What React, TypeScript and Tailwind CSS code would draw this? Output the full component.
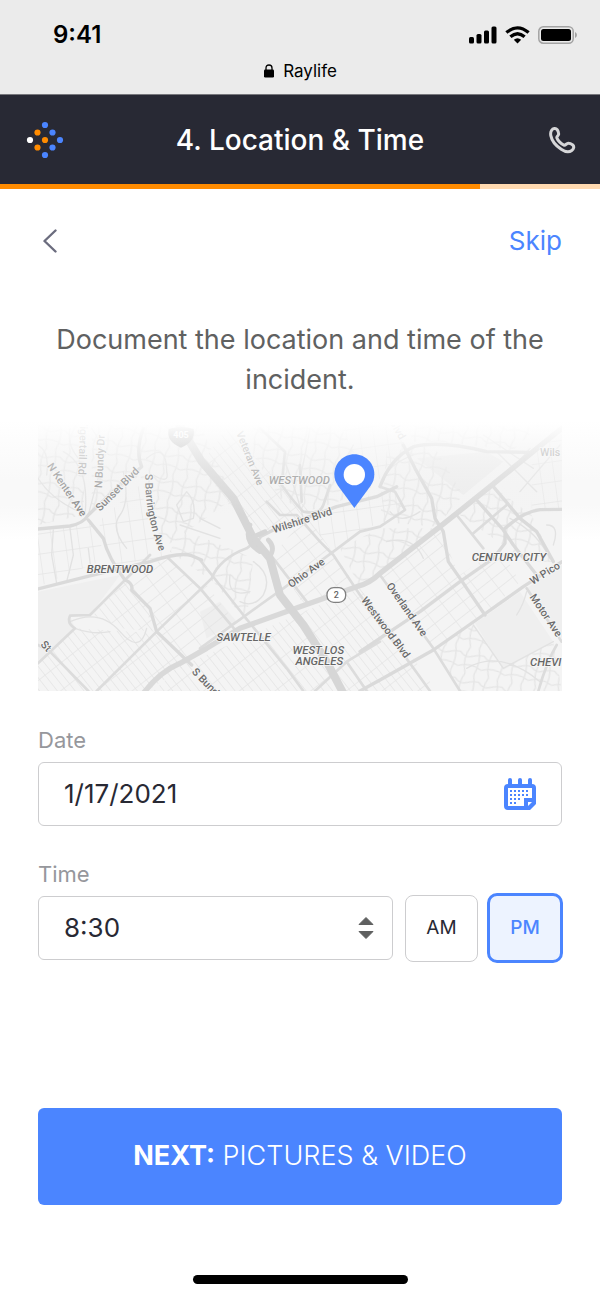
import { useState } from "react";

const LOCAL_AREAS: { points: string; fill: string }[] = [
  { points: "54,350 210,320 262,430 54,515", fill: "url(#gridUpright)" },
  { points: "235,320 360,210 390,330 440,425 285,450", fill: "url(#gridUpright)" },
  { points: "54,30 200,30 190,300 54,330", fill: "url(#gridLoose)" },
  { points: "215,30 540,30 640,250 430,400 360,180 215,290", fill: "url(#gridLoose)" },
  { points: "320,490 440,425 545,520 410,650", fill: "url(#gridDiagonal)" },
  { points: "450,410 480,340 700,430 680,620 580,500", fill: "url(#gridLoose)" },
  { points: "54,745 165,640 410,655 510,745 380,828 54,828", fill: "url(#gridDiagonalTight)" },
  { points: "220,600 315,500 390,590 405,650 300,640", fill: "url(#gridDiagonalTight)" },
  { points: "410,650 560,510 660,640 500,740", fill: "url(#gridDiagonal)" },
  { points: "480,755 850,590 985,828 400,828", fill: "url(#gridDiagonalTight)" },
  { points: "700,30 960,30 1060,225 860,290 780,250 700,120", fill: "url(#gridLoose)" },
  { points: "860,300 1130,215 1150,290 1020,350 930,410", fill: "url(#gridUpright)" },
  { points: "960,400 1080,340 1250,340 1080,475 1020,520", fill: "url(#gridLoose)" },
  { points: "540,150 700,370 870,290 770,190 620,40", fill: "url(#gridDiagonalTight)" },
  { points: "760,420 860,300 1010,515 850,570", fill: "url(#gridDiagonal)" },
  { points: "850,590 1020,520 1180,730 1250,828 985,828", fill: "url(#gridDiagonalTight)" },
  { points: "1080,480 1260,340 1320,490 1395,600 1240,700", fill: "url(#gridDiagonal)" },
  { points: "960,30 1100,30 1160,90 1090,180 1050,220", fill: "url(#gridUpright)" },
  { points: "1160,30 1560,30 1480,105 1260,80 1180,80", fill: "url(#gridLoose)" },
  { points: "1100,110 1240,90 1330,240 1250,335 1080,320", fill: "url(#gridLoose)" },
  { points: "1320,480 1440,400 1500,500 1395,600", fill: "url(#gridDiagonal)" },
  { points: "1535,100 1626,60 1626,280 1535,280", fill: "url(#gridUpright)" },
  { points: "1320,300 1420,215 1535,300 1600,440 1520,440", fill: "url(#gridLoose)" },
  { points: "1240,700 1360,630 1450,760 1600,680 1626,828 1320,828", fill: "url(#gridLoose)" },
];

const MINOR_ROADS = [
  "M150 340 L160 420 L140 500 M100 345 L95 420 L110 505 M205 400 L215 480",
  "M130 110 Q210 150 195 300 M215 40 Q260 100 240 170 T205 300",
  "M54 190 Q100 260 190 295 M54 90 Q90 110 80 180 M150 40 Q140 90 175 130",
  "M310 170 Q330 260 300 300 T320 400 M380 130 Q440 80 440 170 Q450 210 400 180",
  "M470 270 L500 230 Q530 260 520 310 L490 320 Z M480 330 L600 370 M540 310 L600 340",
  "M150 620 Q240 580 300 650 T380 640 M165 640 Q220 660 270 650",
  "M630 480 Q620 550 690 530 M700 440 Q760 480 730 540 Q700 580 660 560",
  "M850 310 Q820 200 790 130 M870 40 Q860 100 840 190 M1000 90 Q970 140 950 190",
  "M1090 200 Q1100 150 1180 120 M1110 290 Q1140 330 1200 290 M1100 380 Q1180 360 1210 430",
  "M1430 110 Q1480 160 1550 230 M1470 310 Q1550 350 1590 430 M1580 330 Q1620 330 1600 390",
  "M1360 630 L1450 760 L1600 680 M1490 600 Q1510 570 1520 530 M1340 760 Q1440 700 1560 800",
  "M1390 60 L1540 160 M1460 180 L1530 100 M1500 230 L1620 90",
];

const MEDIUM_ROADS = [
  "M54 745 L165 640 Q140 625 150 602 L210 600 L390 420",
  "M54 690 L90 710 L205 828",
  "M230 828 L410 650 L575 490 Q600 430 680 400 L720 370",
  "M445 430 L540 520 L650 650",
  "M540 435 L670 600 L800 760 L850 828",
  "M740 260 L780 300 L830 300 L900 380 L940 420 L1020 540",
  "M720 40 L795 110 L785 210 Q820 260 850 290 Q900 300 910 270 L930 210 M840 150 L845 260",
  "M1020 540 L1170 745 L1230 828",
  "M540 700 L720 570 L790 520 L940 410 L1020 350 L1080 335 L1155 285 L1125 230 L1080 215",
  "M980 740 L1040 828 M980 740 L1080 680 M885 828 L980 740",
  "M1080 480 L1240 700 L1320 828",
  "M1310 300 L1390 400 M1360 355 L1460 270",
  "M1520 520 L1625 680 M1610 690 Q1580 740 1555 828",
  "M760 430 L860 560",
];

const MAIN_ROADS = [
  "M54 342 L150 333 Q190 325 205 300 L310 200 L365 155 Q345 110 370 40",
  "M205 315 L250 370 Q265 430 315 495 Q340 505 335 525 L390 580 L410 650 L515 750",
  "M54 522 L200 485 L390 440 Q480 410 515 422 L545 435",
  "M1080 215 Q1110 130 1180 95 Q1260 75 1400 110 L1530 112",
  "M1150 90 L1185 160 L1235 250 L1245 310 L1270 350 L1285 440 L1320 490 L1395 600",
  "M1370 255 L1450 345 L1480 390 L1550 480",
  "M1420 215 L1500 310 L1550 350 L1600 440",
  "M1455 340 Q1510 290 1560 284 L1626 283",
  "M1455 350 L1455 385 L1420 430 L1320 500 L1200 590 L1020 710",
  "M1626 440 L1510 515 L1390 600 L1240 705 L1080 795 L1020 828",
  "M720 365 L760 345 L950 275 L1070 245 L1130 215",
];

type MapLabel = { text: string; x: number; y: number; angle: number; color: string };

const STREETS: MapLabel[] = [
  { text: "N Kenter Ave", x: 80, y: 153, angle: 56, color: "#8a8a8a" },
  { text: "Tigertail Rd", x: 181, y: 14, angle: 92, color: "#a4a4a4" },
  { text: "N Bundy Dr", x: 246, y: 220, angle: -87, color: "#939393" },
  { text: "Sunset Blvd", x: 240, y: 290, angle: -45, color: "#808080" },
  { text: "Veteran Ave", x: 648, y: 54, angle: 68, color: "#9c9c9c" },
  { text: "Wilshire Blvd", x: 762, y: 355, angle: -18, color: "#707070" },
  { text: "Ohio Ave", x: 814, y: 520, angle: -36, color: "#6b6b6b" },
  { text: "Westwood Blvd", x: 1022, y: 556, angle: 53, color: "#6b6b6b" },
  { text: "Overland Ave", x: 1098, y: 512, angle: 55, color: "#6b6b6b" },
  { text: "W Pico", x: 1538, y: 510, angle: -32, color: "#6b6b6b" },
  { text: "Motor Ave", x: 1528, y: 546, angle: 56, color: "#6b6b6b" },
  { text: "S Bundy", x: 514, y: 772, angle: 46, color: "#6b6b6b" },
  { text: "St", x: 60, y: 690, angle: 46, color: "#6b6b6b" },
  { text: "Blvd", x: 1108, y: 22, angle: 60, color: "#bdbdbd" },
  { text: "Wils", x: 1560, y: 122, angle: 0, color: "#9c9c9c" },
];

const DISTRICTS = [
  { text: "BRENTWOOD", x: 300, y: 475, color: "#666666" },
  { text: "WESTWOOD", x: 838, y: 207, color: "#8c8c8c" },
  { text: "SAWTELLE", x: 671, y: 679, color: "#666666" },
  { text: "WEST LOS", x: 895, y: 716, color: "#666666" },
  { text: "ANGELES", x: 898, y: 750, color: "#666666" },
  { text: "CENTURY CITY", x: 1467, y: 438, color: "#666666" },
  { text: "CHEVI", x: 1577, y: 752, color: "#666666" },
];

function IncidentMap() {
  return (
    <svg
      viewBox="54 30 1572 798"
      className="block w-full font-['Roboto',sans-serif]"
      role="img"
      aria-label="Map of the incident location"
    >
      <defs>
        <pattern id="gridUpright" width="40" height="60" patternUnits="userSpaceOnUse" patternTransform="rotate(-8)">
          <path d="M0 0H40M0 0V60" stroke="#e5e5e5" strokeWidth="4" fill="none" />
        </pattern>
        <pattern id="gridDiagonal" width="54" height="34" patternUnits="userSpaceOnUse" patternTransform="rotate(-38)">
          <path d="M0 0H54M0 0V34" stroke="#e4e4e4" strokeWidth="4" fill="none" />
        </pattern>
        <pattern id="gridDiagonalTight" width="66" height="21" patternUnits="userSpaceOnUse" patternTransform="rotate(52)">
          <path d="M0 0H66M0 0V21" stroke="#e4e4e4" strokeWidth="4" fill="none" />
        </pattern>
        <pattern id="gridLoose" width="72" height="80" patternUnits="userSpaceOnUse" patternTransform="rotate(12)">
          <path
            d="M0 18Q18 36 36 27T72 18M27 0Q9 36 27 80M54 0Q67 40 54 80M0 62Q36 44 72 62"
            stroke="#e5e5e5"
            strokeWidth="4"
            fill="none"
          />
        </pattern>
        <linearGradient id="mapFade" x1="0" y1="0" x2="0" y2="1">
          <stop offset="0" stopColor="#ffffff" stopOpacity="0.95" />
          <stop offset="0.5" stopColor="#f6f6f6" stopOpacity="0.4" />
          <stop offset="1" stopColor="#f0f0f0" stopOpacity="0" />
        </linearGradient>
        <path id="barrington" d="M376 176 Q372 300 426 430" />
      </defs>

      <rect x="54" y="30" width="1572" height="798" fill="#f4f4f4" />
      <path d="M54 530 L300 480 L210 600 L150 602 L165 640 L54 740Z" fill="#efefef" />
      <path d="M1365 625 L1500 530 L1600 680 L1450 765Z" fill="#efefef" />
      <path d="M1190 130 L1400 110 L1450 140 L1330 240Z" fill="#ededed" />
      <path d="M1520 520 L1626 450 L1626 670Z" fill="#efefef" />
      <path d="M540 590 L600 560 L650 620 L560 670Z" fill="#eeeeee" />

      {LOCAL_AREAS.map((area) => (
        <polygon key={area.points} points={area.points} fill={area.fill} />
      ))}
      <g fill="none" strokeLinejoin="round" strokeLinecap="round">
        <path d={MINOR_ROADS.join(" ")} stroke="#e2e2e2" strokeWidth="4" />
        <path d={MEDIUM_ROADS.join(" ")} stroke="#dcdcdc" strokeWidth="8" />
        <path d={MAIN_ROADS.join(" ")} stroke="#dadada" strokeWidth="10" />
        <path
          d="M1640 28 L1410 215 L1260 335 L1080 475 Q1050 505 1010 515 L840 575 L660 640 L560 700 L480 745 Q420 770 370 835"
          stroke="#d9d9d9"
          strokeWidth="16"
        />
        <path
          d="M475 25 L545 140 L640 250 L700 370 L750 430 L780 540 L850 630 L920 740 L970 835"
          stroke="#d6d6d6"
          strokeWidth="24"
        />
        <path d="M690 370 L735 350 M745 375 Q770 400 745 430 M690 330 Q670 380 720 410" stroke="#d6d6d6" strokeWidth="14" />
      </g>

      <g stroke="#f7f7f7" strokeWidth="5" paintOrder="stroke" strokeLinejoin="round">
        <g fontSize="32" fontWeight="500">
          {STREETS.map((s) => (
            <text key={s.text} transform={`translate(${s.x} ${s.y}) rotate(${s.angle})`} fill={s.color}>
              {s.text}
            </text>
          ))}
          <text fill="#777777">
            <textPath href="#barrington">S Barrington Ave</textPath>
          </text>
        </g>
        <g fontSize="34" fontStyle="italic" fontWeight="500">
          {DISTRICTS.map((d) => (
            <text key={d.text} x={d.x} y={d.y} textAnchor="middle" fill={d.color}>
              {d.text}
            </text>
          ))}
        </g>
      </g>

      <path d="M446 42 Q483 30 521 42 Q528 80 483 98 Q438 80 446 42Z" fill="#b4b4b4" />
      <text x="483" y="69" fontSize="27" fontWeight="700" textAnchor="middle" fill="#ffffff">
        405
      </text>
      <rect x="921" y="518" width="56" height="44" rx="20" fill="#ffffff" stroke="#808080" strokeWidth="4" />
      <text x="949" y="550" fontSize="27" fontWeight="500" textAnchor="middle" fill="#666666">
        2
      </text>

      <rect x="54" y="30" width="1572" height="270" fill="url(#mapFade)" />
      <path
        d="M1003 118c-33 0-60 27-60 60 0 14 4 24 11 34l49 67 49-67c7-10 11-20 11-34 0-33-27-60-60-60z"
        fill="#4b85ff"
      />
      <circle cx="1003" cy="179" r="32" fill="#ffffff" />
    </svg>
  );
}

function StatusBar() {
  return (
    <div className="flex h-[95px] flex-col border-b border-[#77777c] bg-[#ebebeb] text-black">
      <div className="flex items-center justify-between pt-[18px] pr-[23px] pl-[53px]">
        <span className="text-2xl leading-[34px] font-semibold">9:41</span>
        <div className="flex items-center gap-2">
          <svg viewBox="0 0 28 18" className="h-[18px] w-7">
            <rect x="0" y="11" width="5" height="6.5" rx="1.5" />
            <rect x="7.5" y="8" width="5" height="9.5" rx="1.5" />
            <rect x="15" y="4.5" width="5" height="13" rx="1.5" />
            <rect x="22.5" y="0.5" width="5" height="17" rx="1.5" />
          </svg>
          <svg viewBox="0 0 25 18" className="h-[18px] w-[25px]">
            <g fill="none" stroke="#000000" strokeWidth="3.3">
              <path d="M1.4 6.6Q12.5 -2.8 23.6 6.6" />
              <path d="M5.4 10.8Q12.5 4.6 19.6 10.8" />
            </g>
            <path d="M8.8 13.8Q12.5 10.6 16.2 13.8L12.5 17.6Z" />
          </svg>
          <svg viewBox="0 0 39 18" className="h-[18px] w-[39px]">
            <rect x="0.8" y="0.8" width="34.4" height="16.4" rx="4.5" fill="none" stroke="#a3a3a3" strokeWidth="1.5" />
            <rect x="3" y="3" width="30" height="12" rx="2.5" />
            <path d="M37 6V12Q39 11 39 9T37 6Z" fill="#a3a3a3" />
          </svg>
        </div>
      </div>
      <div className="flex items-center justify-center gap-2 pt-2">
        <svg viewBox="0 0 12 14" className="h-3.5 w-3">
          <rect x="1" y="5.5" width="10" height="8" rx="1.3" />
          <path d="M3 6.5V4Q3 1 6 1T9 4V6.5" fill="none" stroke="#000000" strokeWidth="1.3" />
        </svg>
        <span className="text-[17px] leading-[22px]">Raylife</span>
      </div>
    </div>
  );
}

function RaylifeLogo() {
  return (
    <svg viewBox="0 0 38 38" className="h-[38px] w-[38px] justify-self-end" role="img" aria-label="Raylife">
      <g fill="#4b85ff">
        <circle cx="19" cy="4" r="3.1" />
        <circle cx="26.5" cy="11.5" r="3.1" />
        <circle cx="34" cy="19" r="3.1" />
        <circle cx="26.5" cy="26.5" r="3.1" />
        <circle cx="19" cy="34" r="3.1" />
      </g>
      <g fill="#ff8b00">
        <circle cx="11.5" cy="11.5" r="3.1" />
        <circle cx="19" cy="19" r="3.1" />
        <circle cx="11.5" cy="26.5" r="3.1" />
      </g>
      <circle cx="4" cy="19" r="3.1" fill="#ffffff" />
    </svg>
  );
}

function CalendarIcon() {
  const rows = [5, 5, 3, 2];
  return (
    <svg viewBox="0 0 32 32" className="h-8 w-8" fill="#4b85ff">
      <path
        fillRule="evenodd"
        d="M4 6H28Q32 6 32 10V26L26 32H4Q0 32 0 28V10Q0 6 4 6ZM4 10V28H20V20H28V10Z"
      />
      <path d="M24 24H28L24 28Z" fill="#ffffff" />
      <rect x="4" y="0" width="4" height="9" rx="2" />
      <rect x="14" y="0" width="4" height="9" rx="2" />
      <rect x="24" y="0" width="4" height="9" rx="2" />
      {rows.map((count, row) =>
        Array.from({ length: count }, (_, col) => (
          <rect key={`${row}-${col}`} x={6 + col * 4} y={12 + row * 4} width="2" height="2" />
        )),
      )}
    </svg>
  );
}

export default function App() {
  const [period, setPeriod] = useState<"AM" | "PM">("PM");
  const [date, setDate] = useState("1/17/2021");

  return (
    <div className="flex min-h-screen flex-col bg-white font-['Inter',sans-serif]">
      <StatusBar />
      <header className="grid h-[89px] grid-cols-[44px_1fr_44px] items-center bg-[#282934] px-5">
        <RaylifeLogo />
        <h1 className="text-center text-[28px] leading-9 font-medium text-white">4. Location &amp; Time</h1>
        <button type="button" aria-label="Call" className="flex justify-end pr-1">
          <svg
            viewBox="0 0 28 28"
            className="h-7 w-7"
            fill="none"
            stroke="#d6d6d8"
            strokeWidth="3"
            strokeLinejoin="round"
          >
            <path d="M3.6 4.4C4.8 2.2 7.8 1.8 9.2 3.6C10.2 5.2 10.8 6.8 10.6 8.4C10.2 10 8.6 10.2 8.8 11.8C9.6 14.4 13.4 18.4 16.2 19.2C17.8 19.4 18 17.6 19.6 17.4C21.4 17.2 23.4 18 24.8 19C26.4 20.4 25.8 23.2 23.8 24.4C21.2 26.2 17 25.8 13.2 23.2C8 19.8 3.8 14.6 2.8 9.6C2.4 7.4 2.6 5.8 3.6 4.4Z" />
          </svg>
        </button>
      </header>
      <div className="h-[5px] bg-[#ffd9b0]" role="progressbar" aria-label="Claim progress" aria-valuenow={80}>
        <div className="h-full w-4/5 bg-[#ff8b00]" />
      </div>

      <main className="flex flex-1 flex-col">
        <nav className="flex items-center justify-between px-[38px] pt-8">
          <button type="button" aria-label="Back" className="px-1">
            <svg viewBox="0 0 16 24" className="h-6 w-4" fill="none" stroke="#6b6c7e" strokeWidth="2.4">
              <path d="M13.5 1.5L2.5 12L13.5 22.5" strokeLinecap="round" strokeLinejoin="round" />
            </svg>
          </button>
          <a href="#skip" className="text-[26px] leading-10 text-[#4b85ff]">
            Skip
          </a>
        </nav>

        <p className="px-[38px] pt-[59px] text-center text-[27px] leading-10 text-[#606161]">
          Document the location and time of the incident.
        </p>

        <section className="bg-[linear-gradient(to_bottom,#ffffff_20px,#f9f9f9_80px,#f9f9f9_105px,#ffffff_140px)] px-[38px] pt-[25px]">
          <IncidentMap />
        </section>

        <form className="flex flex-1 flex-col px-[38px] pt-[33px]" onSubmit={(e) => e.preventDefault()}>
          <label htmlFor="date" className="text-[22px] leading-8 text-[#96979c]">
            Date
          </label>
          <div className="mt-[6px] flex h-16 items-center rounded-md border border-[#cdcdcf] pr-[25px] pl-[25px]">
            <input
              id="date"
              value={date}
              onChange={(e) => setDate(e.target.value)}
              className="min-w-0 flex-1 bg-transparent text-[26px] leading-8 text-[#282934] outline-none"
            />
            <button type="button" aria-label="Open calendar">
              <CalendarIcon />
            </button>
          </div>

          <label htmlFor="time" className="mt-8 text-[22px] leading-8 text-[#96979c]">
            Time
          </label>
          <div className="mt-[3px] flex items-center">
            <div className="grid h-16 min-w-0 flex-1 grid-cols-1 items-center rounded-md border border-[#cdcdcf]">
              <select
                id="time"
                defaultValue="8:30"
                className="col-start-1 row-start-1 h-full w-full appearance-none bg-transparent pl-[25px] text-[26px] leading-8 text-[#282934] outline-none"
              >
                <option>8:00</option>
                <option>8:30</option>
                <option>9:00</option>
              </select>
              <svg
                viewBox="0 0 16 24"
                className="pointer-events-none col-start-1 row-start-1 mr-[18px] h-6 w-4 justify-self-end"
                fill="#5f6060"
                stroke="#5f6060"
                strokeWidth="1"
                strokeLinejoin="round"
              >
                <path d="M1 8.5L8 1.5L15 8.5ZM1 15.5L8 22.5L15 15.5Z" />
              </svg>
            </div>
            <div className="-mr-px ml-3 flex items-center gap-[9px]" role="group" aria-label="AM or PM">
              {(["AM", "PM"] as const).map((value) => (
                <button
                  key={value}
                  type="button"
                  aria-pressed={period === value}
                  onClick={() => setPeriod(value)}
                  className={
                    period === value
                      ? "h-[70px] w-[76px] rounded-[10px] border-3 border-[#4b85ff] bg-[#edf3ff] text-[19px] font-medium text-[#4b85ff]"
                      : "h-[67px] w-[73px] rounded-lg border border-[#cdcdcf] bg-white text-[19px] text-[#282934]"
                  }
                >
                  {value}
                </button>
              ))}
            </div>
          </div>

          <button
            type="submit"
            className="mt-[145px] h-[97px] rounded-md bg-[#4b85ff] text-[27px] font-light text-white"
          >
            <span className="font-bold">NEXT:</span> PICTURES &amp; VIDEO
          </button>
        </form>

        <div className="mt-auto flex justify-center pb-3">
          <div className="h-[9px] w-[215px] rounded-full bg-black" />
        </div>
      </main>
    </div>
  );
}
